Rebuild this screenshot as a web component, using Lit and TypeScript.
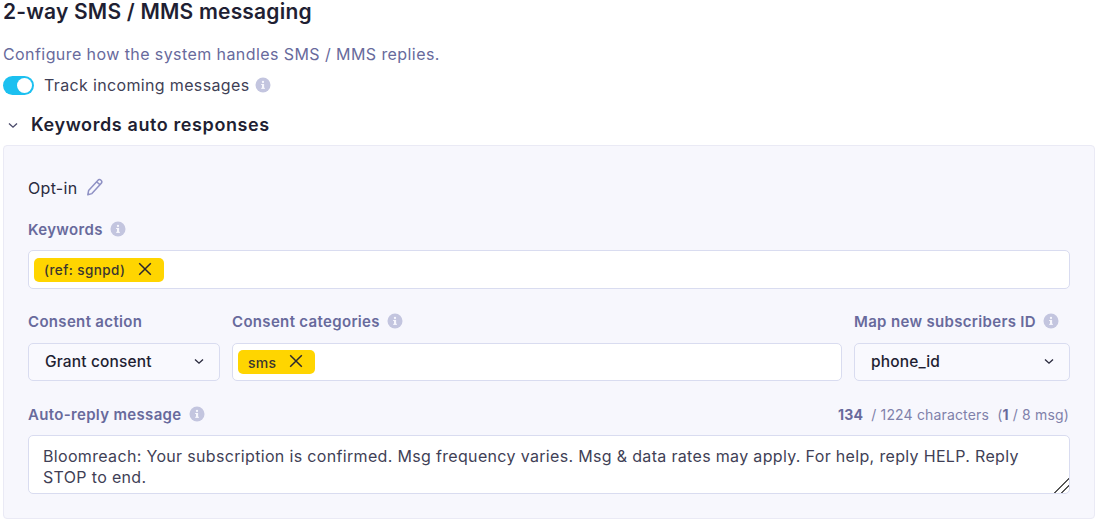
import { LitElement, html, css, svg } from "lit";
import { customElement } from "lit/decorators.js";

const info = () => html`<svg class="info" viewBox="0 0 16 16" width="16" height="16" aria-hidden="true">
  <circle cx="8" cy="8" r="7.5" fill="#c3c5df"></circle>
  <rect x="7" y="7" width="2.1" height="4.6" fill="#f7f7fd"></rect>
  <rect x="6.1" y="7" width="1.5" height="1" fill="#f7f7fd"></rect>
  <rect x="6.1" y="10.8" width="3.9" height="1" fill="#f7f7fd"></rect>
  <circle cx="8" cy="5" r="1.15" fill="#f7f7fd"></circle>
</svg>`;

const chevron = (cls: string) => html`<svg class=${cls} viewBox="0 0 12 8" width="10" height="7" aria-hidden="true">
  <path d="M1.2 1.5 L6 6 L10.8 1.5" fill="none" stroke="currentColor" stroke-width="1.6"></path>
</svg>`;

const closeX = () => html`<svg class="x" viewBox="0 0 14 14" width="14" height="14" aria-hidden="true">
  <path d="M1.2 1.2 L12.8 12.8 M12.8 1.2 L1.2 12.8" fill="none" stroke="#2a2730" stroke-width="1.5"></path>
</svg>`;

const pencil = svg`<path d="M2.6 12.6 L11.8 2.4 C12.7 1.4 14 1.3 15 2.2 C16 3.1 16 4.4 15.1 5.4 L5.9 15.6 L1.8 16.8 Z M10.6 3.8 L14.1 6.9" fill="none" stroke="#8f91c4" stroke-width="1.5" stroke-linejoin="round"></path>`;

@customElement("app-root")
export class AppRoot extends LitElement {
  static styles = css`
    :host {
      display: block;
      width: 1100px;
      height: 523px;
      overflow: hidden;
      box-sizing: border-box;
      padding: 0 5px 0 3px;
      background: #fff;
      font-family: Inter, "Liberation Sans", sans-serif;
      color: #1f1f33;
      font-size: 16px;
    }
    h1 {
      margin: 0;
      font-size: 21px;
      line-height: 23px;
      font-weight: 600;
      letter-spacing: 0.2px;
      color: #1f1f33;
    }
    .desc {
      margin: 21px 0 0;
      font-size: 16px;
      line-height: 20px;
      letter-spacing: 0.42px;
      color: #686a9c;
    }
    .track {
      display: flex;
      align-items: center;
      margin-top: 11px;
      height: 20px;
    }
    .switch {
      width: 31px;
      height: 19px;
      border-radius: 10px;
      background: #1cc0f0;
      display: flex;
      align-items: center;
      justify-content: flex-end;
      padding: 0 2px;
      box-sizing: border-box;
      margin-right: 10px;
    }
    .knob {
      width: 15px;
      height: 15px;
      border-radius: 50%;
      background: #fff;
    }
    .track span {
      font-size: 16px;
      letter-spacing: 0.35px;
      color: #3f3f56;
      margin-right: 6px;
    }
    .section {
      display: flex;
      align-items: center;
      margin-top: 19px;
      height: 22px;
    }
    .section .c {
      color: #4a4a6a;
      margin: 0 13px 0 5px;
    }
    .section h2 {
      margin: 0;
      font-size: 18px;
      line-height: 22px;
      font-weight: 600;
      letter-spacing: 0.6px;
      color: #1f1f33;
    }
    .panel {
      margin-top: 9px;
      height: 374px;
      box-sizing: border-box;
      background: #f7f7fd;
      border: 1px solid #eaeaf5;
      border-radius: 4px;
      padding: 32px 24px 0;
    }
    .opt {
      display: flex;
      align-items: center;
      height: 20px;
      font-size: 16px;
      letter-spacing: 0.3px;
      color: #2b2b40;
    }
    .opt svg {
      margin-left: 9px;
      margin-top: -3px;
    }
    .label {
      display: flex;
      align-items: center;
      height: 20px;
      font-size: 15px;
      font-weight: 600;
      letter-spacing: 0.33px;
      color: #686a9c;
      white-space: nowrap;
    }
    .label .info {
      margin-left: 7px;
    }
    .kw {
      margin-top: 21px;
    }
    .field {
      box-sizing: border-box;
      background: #fff;
      border: 1px solid #d9dcf0;
      border-radius: 5px;
      display: flex;
      align-items: center;
    }
    .kwfield {
      height: 39px;
      margin-top: 11px;
      padding-left: 5px;
    }
    .tag {
      display: flex;
      align-items: center;
      height: 24px;
      border-radius: 5px;
      background: #ffd500;
      padding: 0 12px 0 10px;
      font-size: 13.5px;
      font-weight: 500;
      letter-spacing: 0.42px;
      color: #3a3630;
      white-space: nowrap;
    }
    .tag .x {
      margin-left: 13px;
      margin-top: -2px;
    }
    .row {
      display: grid;
      grid-template-columns: 192px 610px 216px;
      column-gap: 12px;
      margin-top: 22px;
    }
    .row .field {
      margin-top: 12px;
      height: 38px;
    }
    .select {
      background: #f9f9fe !important;
      justify-content: space-between;
      padding: 0 15px 2px 16px;
      font-size: 15.5px;
      font-weight: 500;
      letter-spacing: 0.15px;
      color: #1f1f33;
    }
    .select svg {
      color: #2a2a3e;
      margin-top: 1px;
    }
    .cats {
      padding-left: 5px;
    }
    .cats .tag {
      padding-right: 12px;
      font-size: 14px;
      height: 24px;
      letter-spacing: 0.3px;
    }
    .msg-head {
      display: flex;
      justify-content: space-between;
      align-items: center;
      margin-top: 23px;
      height: 20px;
    }
    .count {
      font-size: 14px;
      letter-spacing: 0.16px;
      color: #7f81aa;
      padding-right: 1px;
      white-space: pre;
    }
    .count b {
      font-weight: 700;
      color: #686a9c;
    }
    textarea {
      display: block;
      width: 100%;
      box-sizing: border-box;
      height: 59px;
      margin: 11px 0 0;
      border: 1px solid #d9dcf0;
      border-radius: 5px;
      background: #fff;
      padding: 10px 14px 0;
      font-family: inherit;
      font-size: 16px;
      letter-spacing: 0.33px;
      line-height: 20.5px;
      color: #3f3f56;
      outline: none;
      resize: vertical;
    }
    textarea::-webkit-resizer {
      background: linear-gradient(
        135deg,
        transparent 48%,
        #555 48% 56%,
        transparent 56% 72%,
        #555 72% 80%,
        transparent 80%
      );
    }
  `;

  render() {
    return html`
      <h1>2-way SMS / MMS messaging</h1>
      <p class="desc">Configure how the system handles SMS / MMS replies.</p>
      <div class="track">
        <div class="switch"><div class="knob"></div></div>
        <span>Track incoming messages</span>
        ${info()}
      </div>
      <div class="section">
        ${chevron("c")}
        <h2>Keywords auto responses</h2>
      </div>
      <div class="panel">
        <div class="opt">
          Opt-in
          <svg viewBox="0 0 18 18" width="18" height="18" aria-hidden="true">${pencil}</svg>
        </div>
        <div class="label kw">Keywords ${info()}</div>
        <div class="field kwfield">
          <div class="tag">(ref: sgnpd) ${closeX()}</div>
        </div>
        <div class="row">
          <div>
            <div class="label">Consent action</div>
            <div class="field select">Grant consent ${chevron("")}</div>
          </div>
          <div>
            <div class="label">Consent categories ${info()}</div>
            <div class="field cats"><div class="tag">sms ${closeX()}</div></div>
          </div>
          <div>
            <div class="label">Map new subscribers ID ${info()}</div>
            <div class="field select">phone_id ${chevron("")}</div>
          </div>
        </div>
        <div class="msg-head">
          <div class="label">Auto-reply message ${info()}</div>
          <div class="count"><b>134</b>  / 1224 characters  (<b>1</b> / 8 msg)</div>
        </div>
        <textarea .value=${"Bloomreach: Your subscription is confirmed. Msg frequency varies. Msg & data rates may apply. For help, reply HELP. Reply STOP to end."}></textarea>
      </div>
    `;
  }
}
